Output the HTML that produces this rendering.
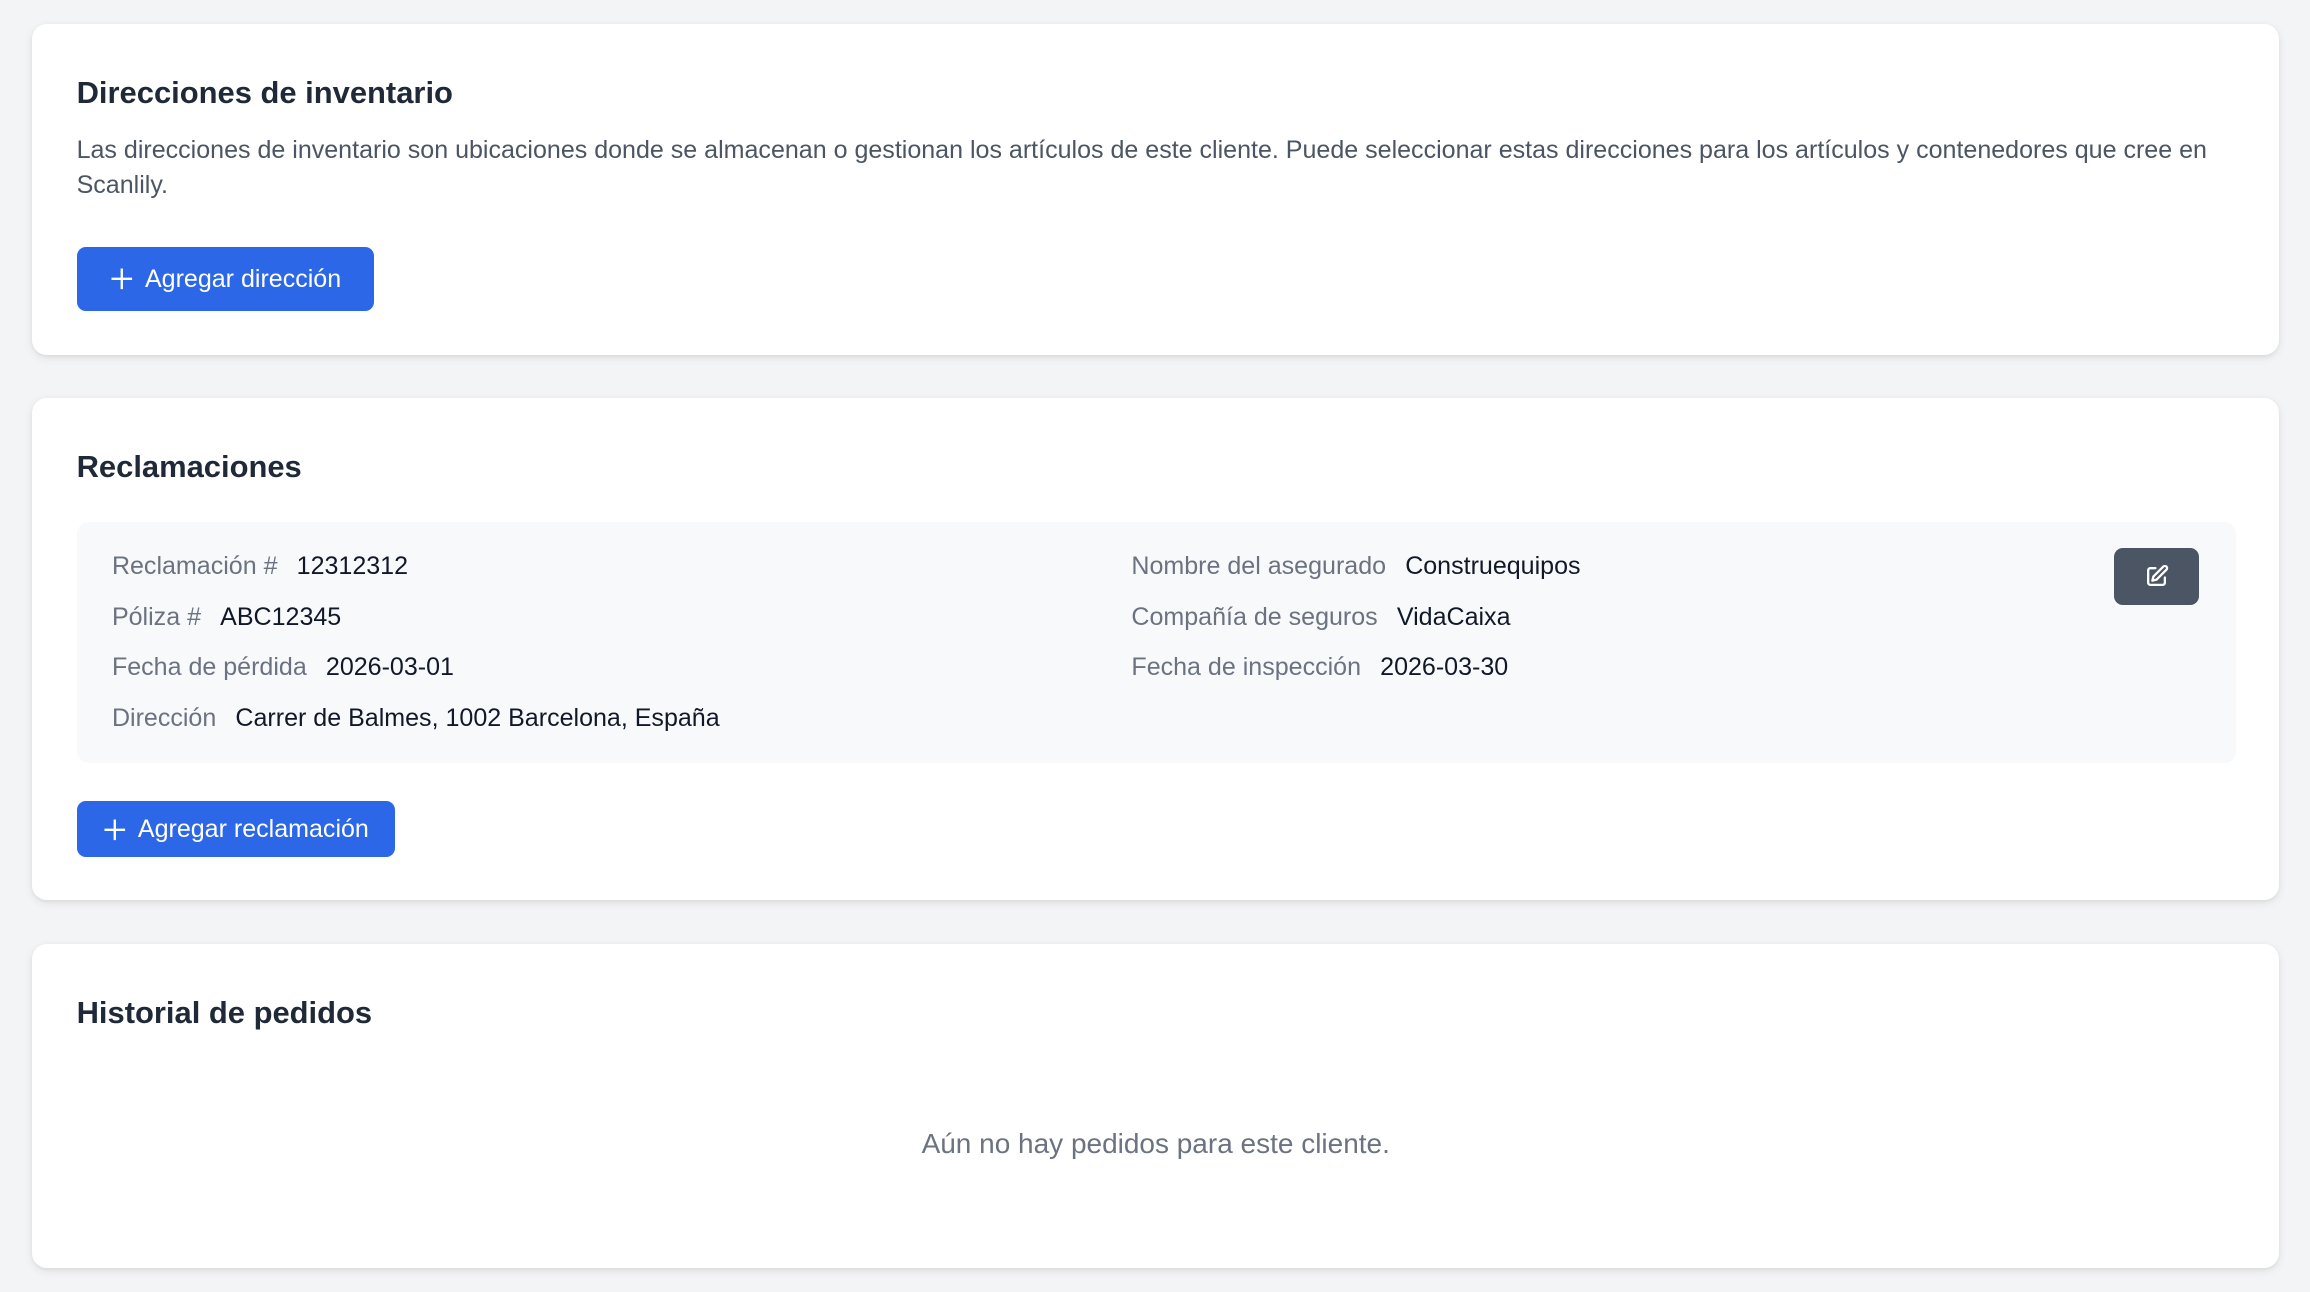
<!DOCTYPE html>
<html><head><meta charset="utf-8"><style>
html,body{margin:0;padding:0;background:#f3f4f6;}
body{width:1568px;height:877px;zoom:1.47321;overflow:hidden;font-family:"Liberation Sans",sans-serif;position:relative;}
.card{position:absolute;left:22px;width:1525px;background:#fff;border-radius:10px;box-shadow:0 2px 6px rgba(0,0,0,.08),0 1px 2px rgba(0,0,0,.05);}
.t{position:absolute;left:30px;font-size:21px;font-weight:600;color:#1f2937;line-height:26px;}
.btn{position:absolute;left:30px;background:#2b67e6;border-radius:6px;color:#fff;font-size:17px;display:flex;align-items:center;justify-content:center;gap:8px;}
.lab{position:absolute;font-size:17px;color:#6b7280;line-height:20px;white-space:nowrap}
.lab b{font-weight:400;color:#111827;margin-left:13px}
</style></head><body>
<div class="card" style="top:16px;height:225px">
 <div class="t" style="top:34px">Direcciones de inventario</div>
 <div style="position:absolute;left:30px;top:74px;font-size:17px;line-height:24px;color:#4b5563;white-space:nowrap">Las direcciones de inventario son ubicaciones donde se almacenan o gestionan los artículos de este cliente. Puede seleccionar estas direcciones para los artículos y contenedores que cree en<br>Scanlily.</div>
 <div class="btn" style="top:152px;width:202px;height:43px"><svg width="16" height="16" viewBox="0 0 16 16"><path d="M8 1v14M1 8h14" stroke="#fff" stroke-width="1.6"/></svg>Agregar dirección</div>
</div>
<div class="card" style="top:270px;height:341px">
 <div class="t" style="top:34px">Reclamaciones</div>
 <div style="position:absolute;left:30px;top:84px;width:1466px;height:164px;background:#f8f9fb;border-radius:8px">
  <div class="lab" style="left:24px;top:21px">Reclamación #<b>12312312</b></div>
  <div class="lab" style="left:24px;top:55px">Póliza #<b>ABC12345</b></div>
  <div class="lab" style="left:24px;top:89px">Fecha de pérdida<b>2026-03-01</b></div>
  <div class="lab" style="left:24px;top:124px">Dirección<b>Carrer de Balmes, 1002 Barcelona, España</b></div>
  <div class="lab" style="left:716px;top:21px">Nombre del asegurado<b>Construequipos</b></div>
  <div class="lab" style="left:716px;top:55px">Compañía de seguros<b>VidaCaixa</b></div>
  <div class="lab" style="left:716px;top:89px">Fecha de inspección<b>2026-03-30</b></div>
  <div style="position:absolute;left:1383px;top:18px;width:58px;height:39px;background:#4b5563;border-radius:6px;display:flex;align-items:center;justify-content:center">
   <svg width="17" height="17" viewBox="0 0 24 24" fill="none" stroke="#fff" stroke-width="2.2" stroke-linecap="round" stroke-linejoin="round"><path d="M11 4H6a2 2 0 0 0-2 2v12a2 2 0 0 0 2 2h12a2 2 0 0 0 2-2v-5"/><path d="M18.5 2.5a2.1 2.1 0 0 1 3 3L12 15l-4 1 1-4z"/></svg>
  </div>
 </div>
 <div class="btn" style="top:274px;width:216px;height:38px"><svg width="16" height="16" viewBox="0 0 16 16"><path d="M8 1v14M1 8h14" stroke="#fff" stroke-width="1.6"/></svg>Agregar reclamación</div>
</div>
<div class="card" style="top:641px;height:220px">
 <div class="t" style="top:34px">Historial de pedidos</div>
 <div style="position:absolute;left:0;right:0;top:125px;text-align:center;font-size:19px;color:#6b7280">Aún no hay pedidos para este cliente.</div>
</div>
</body></html>
